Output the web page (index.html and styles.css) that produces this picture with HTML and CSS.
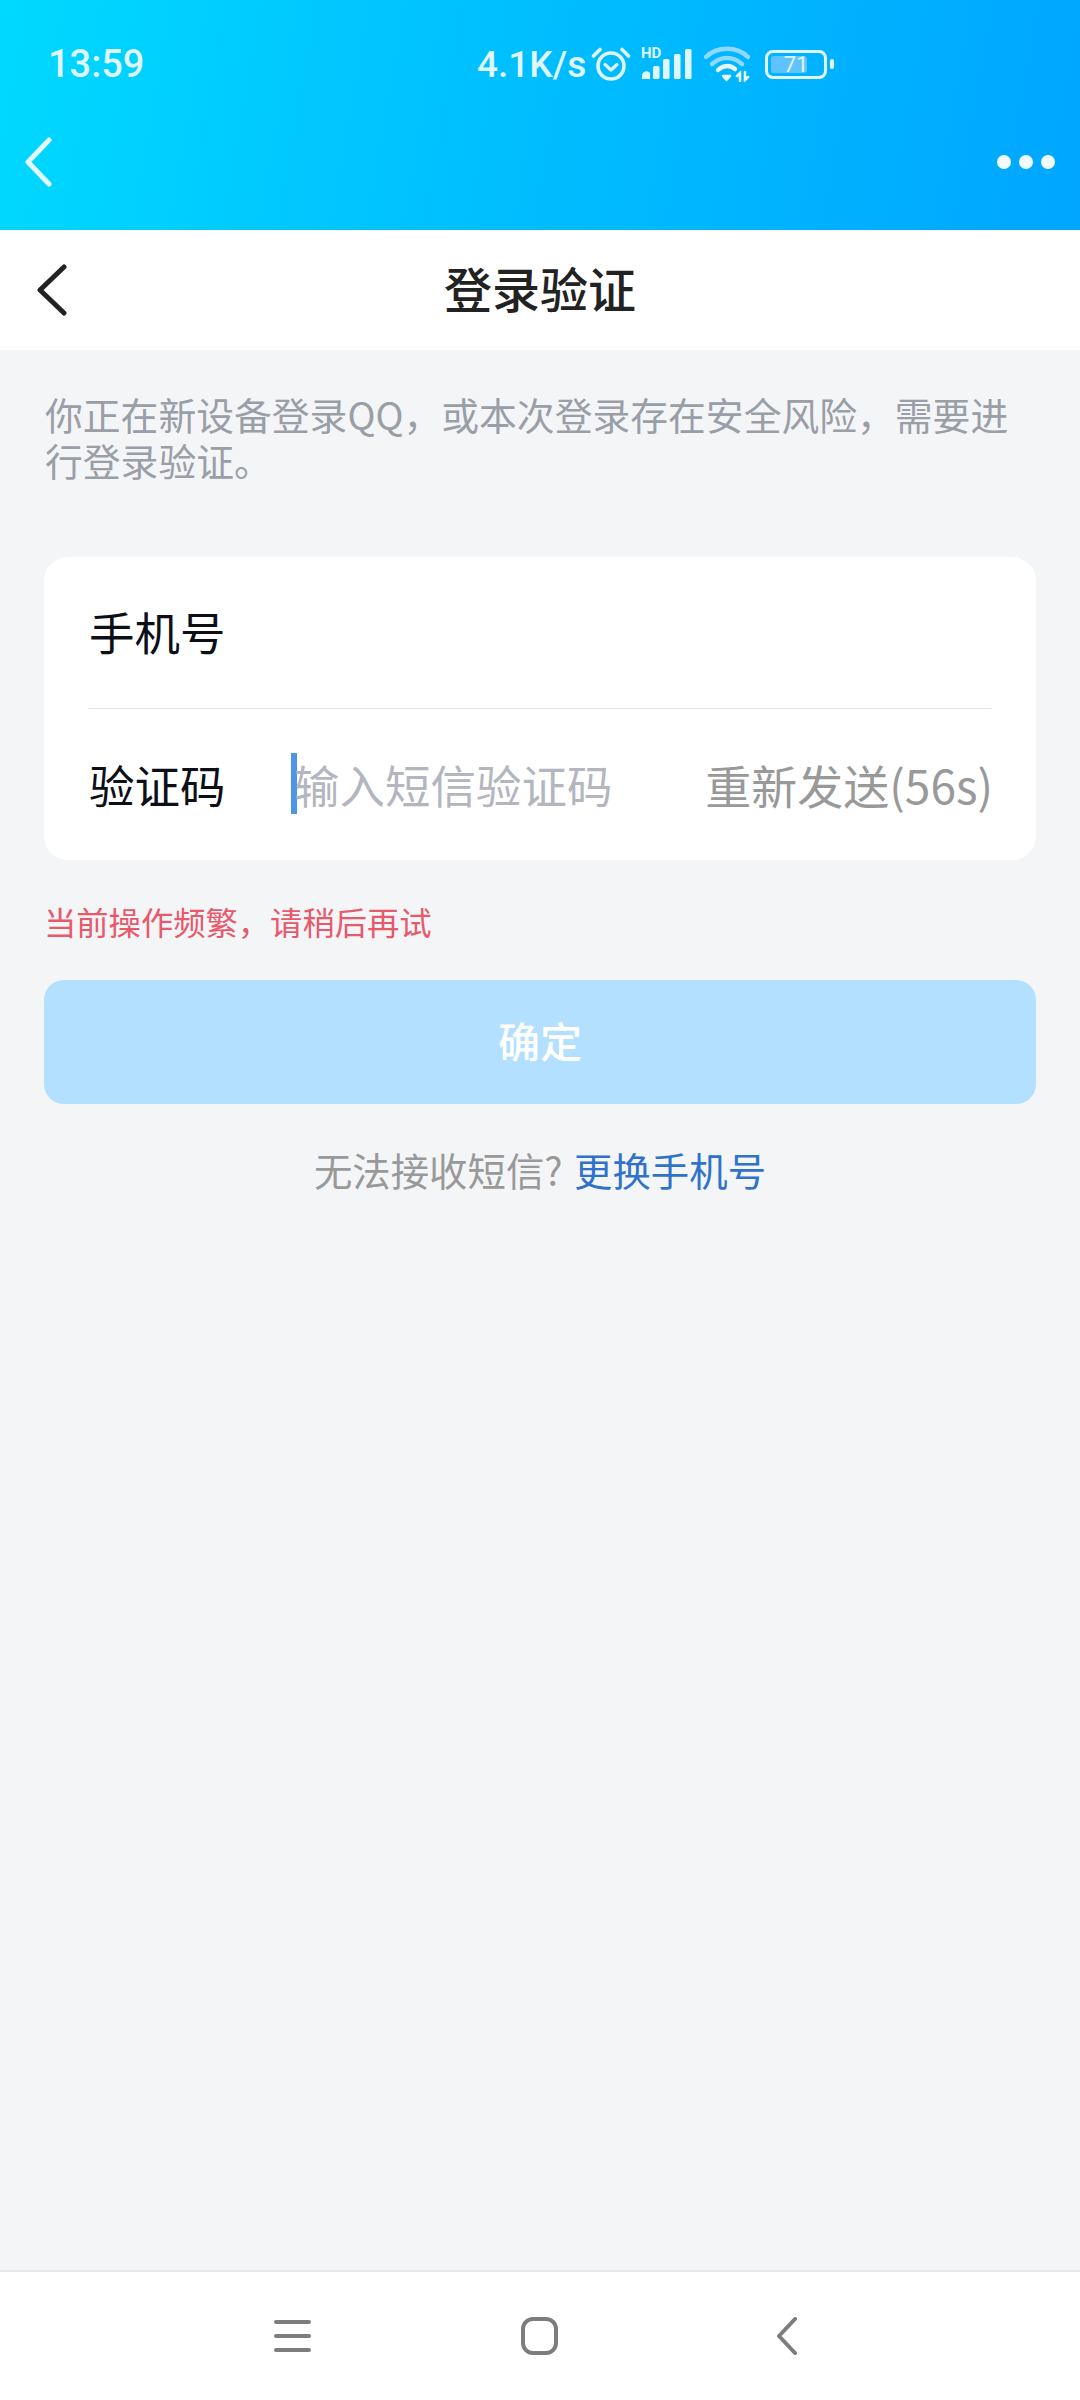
FILE: index.html
```html
<!DOCTYPE html>
<html lang="zh-CN">
<head>
  <meta charset="UTF-8">
  <meta name="viewport" content="width=device-width, initial-scale=1.0">
  <title>登录验证</title>
  <link rel="stylesheet" href="styles.css">
</head>
<body>
  <header class="top">
    <div class="status">
      <span class="status-time">13:59</span>
      <span class="status-speed">4.1K/s</span>
      <svg class="icon-alarm" width="40" height="36" viewBox="0 0 40 36" fill="none" stroke="#dff6ff" stroke-linecap="round" stroke-linejoin="round">
        <circle cx="20" cy="20" r="13" stroke-width="3.6"/>
        <path d="M14 18.500l6 5.500 6-5.500" stroke-width="3.2"/>
        <path d="M2.500 10L9 3.500M37.500 10L31 3.500" stroke-width="3.6"/>
      </svg>
      <div class="signal">
        <span class="signal-hd">HD</span>
        <svg width="50" height="30" viewBox="0 0 50 30" fill="#dff6ff">
          <path d="M0 30v-3a4.500 4.500 0 0 1 8-3v6z"/>
          <rect x="11" y="17" width="6.500" height="13" rx="1.500"/>
          <rect x="21" y="10" width="6.500" height="20" rx="1.500"/>
          <rect x="32" y="5" width="6.500" height="25" rx="1.500"/>
          <rect x="43" y="0" width="6.500" height="30" rx="1.500"/>
        </svg>
      </div>
      <svg class="icon-wifi" width="46" height="36" viewBox="0 0 46 36" fill="none" stroke-linecap="round">
        <path d="M2 11C13 0 33 0 44 11" stroke="#8fd8ff" stroke-width="4.500"/>
        <path d="M8 18c9-8 21-8 30 0" stroke="#8fd8ff" stroke-width="4.500"/>
        <path d="M14 24c5-5 12-5 17-1" stroke="#e8f9ff" stroke-width="4.500"/>
        <path d="M19 30h7l-3.500 4z" fill="#e8f9ff" stroke="#e8f9ff" stroke-width="2.500" stroke-linejoin="round"/>
        <path d="M36 35v-8l-3 3M41 26v8l3-3" stroke="#e8f9ff" stroke-width="2.500"/>
      </svg>
      <div class="battery">
        <div class="battery-body">
          <div class="battery-fill" style="width: 71%"></div>
          <span class="battery-num">71</span>
        </div>
        <div class="battery-tip"></div>
      </div>
    </div>
    <div class="top-nav">
      <svg width="27" height="50" viewBox="0 0 27 50" fill="none" stroke="#e4f8ff" stroke-width="5" stroke-linecap="round" stroke-linejoin="round">
        <path d="M24 3L3 25l21 22"/>
      </svg>
      <div class="dots"><i></i><i></i><i></i></div>
    </div>
  </header>

  <div class="title-bar">
    <svg class="title-back" width="30" height="52" viewBox="0 0 30 52" fill="none" stroke="#222" stroke-width="5" stroke-linecap="round" stroke-linejoin="round">
      <path d="M27 3L3 26l24 23"/>
    </svg>
    <h1 class="title">登录验证</h1>
  </div>

  <main class="content">
    <p class="desc">你正在新设备登录QQ，或本次登录存在安全风险，需要进行登录验证。</p>

    <div class="card">
      <div class="row row-phone">
        <span class="label">手机号</span>
      </div>
      <div class="row row-code">
        <span class="label">验证码</span>
        <span class="caret"></span>
        <span class="placeholder">输入短信验证码</span>
        <span class="resend">重新发送(56s)</span>
      </div>
    </div>

    <p class="error">当前操作频繁，请稍后再试</p>
    <button class="confirm">确定</button>
    <p class="help">无法接收短信? <a class="help-link">更换手机号</a></p>
  </main>

  <nav class="bottom-nav">
    <svg width="37" height="34" viewBox="0 0 37 34" fill="none" stroke="#7d7d7d" stroke-width="4" stroke-linecap="round">
      <path d="M2 3h33M2 17h33M2 31h33"/>
    </svg>
    <svg width="37" height="38" viewBox="0 0 37 38" fill="none" stroke="#7d7d7d" stroke-width="4">
      <rect x="2" y="2" width="33" height="34" rx="10"/>
    </svg>
    <svg width="32" height="38" viewBox="0 0 32 38" fill="none" stroke="#7d7d7d" stroke-width="4" stroke-linecap="round" stroke-linejoin="round">
      <path d="M27 2L11 19l16 17"/>
    </svg>
  </nav>
</body>
</html>
```

FILE: styles.css
```css
* {
  box-sizing: border-box;
}
body {
  margin: 0;
  height: 2400px;
  display: flex;
  flex-direction: column;
  background-color: #f4f5f7;
  font-family: "Noto Sans CJK SC", "Noto Sans", sans-serif;
}

/* blue header with status bar */
.top {
  height: 230px;
  flex-shrink: 0;
  background: linear-gradient(100deg, #00d9ff 0%, #00c2ff 40%, #00a6ff 100%);
  color: #dff6ff;
}
.status {
  height: 128px;
  padding-left: 48px;
  display: flex;
  align-items: center;
  font-family: Roboto, sans-serif;
  font-size: 38px;
  font-weight: 500;
}
.status-time {
  width: 429px;
}
.status-speed {
  width: 114px;
  font-size: 37px;
}
.icon-alarm {
  margin-right: 11px;
}
.signal {
  position: relative;
  width: 50px;
  margin-right: 12px;
}
.signal svg {
  display: block;
}
.signal-hd {
  position: absolute;
  left: -1px;
  top: -3px;
  font-size: 15px;
  line-height: 15px;
  font-weight: 700;
}
.icon-wifi {
  margin-right: 15px;
}
.battery {
  display: flex;
  align-items: center;
  gap: 3px;
}
.battery-body {
  position: relative;
  width: 62px;
  height: 29px;
  padding: 3px;
  border: 3px solid #dff6ff;
  border-radius: 8px;
}
.battery-fill {
  height: 100%;
  background-color: #5fc3ff;
  border-radius: 3px;
}
.battery-num {
  position: absolute;
  inset: 0;
  display: flex;
  align-items: center;
  justify-content: center;
  font-size: 22px;
  font-weight: 400;
}
.battery-tip {
  width: 4px;
  height: 10px;
  background-color: #dff6ff;
  border-radius: 2px;
}
.top-nav {
  height: 67px;
  padding: 0 25px;
  display: flex;
  align-items: center;
  justify-content: space-between;
}
.top-nav svg {
  display: block;
}
.dots {
  display: flex;
  gap: 8px;
}
.dots i {
  width: 14px;
  height: 14px;
  background-color: #f0fbff;
  border-radius: 50%;
}

/* white title bar */
.title-bar {
  height: 120px;
  flex-shrink: 0;
  position: relative;
  display: flex;
  align-items: center;
  justify-content: center;
  background-color: #fff;
}
.title-back {
  position: absolute;
  left: 37px;
  top: 34px;
}
.title {
  margin: 0 0 6px;
  font-size: 48px;
  font-weight: 500;
  color: #222;
}

.content {
  flex: 1;
  padding: 0 44px;
}
.desc {
  margin: 41px 0 0 1px;
  font-size: 37.8px;
  line-height: 46px;
  color: #9a9ea6;
}
.card {
  margin-top: 74px;
  height: 303px;
  padding: 0 45px;
  background-color: #fff;
  border-radius: 24px;
}
.row {
  display: flex;
  align-items: center;
  font-size: 45.5px;
}
.row-phone {
  height: 152px;
  padding-bottom: 3px;
  border-bottom: 1px solid #e4e4e6;
}
.row-code {
  height: 151px;
  padding-bottom: 2px;
}
.label {
  width: 202px;
  color: #0c0f18;
}
.caret {
  width: 6px;
  height: 61px;
  background-color: #4d94ea;
}
.placeholder {
  flex: 1;
  margin-left: -3px;
  color: #b4b6bf;
}
.resend {
  margin-right: -2px;
  font-size: 46px;
  color: #999;
}
.error {
  margin: 39px 0 0;
  font-size: 32.3px;
  line-height: 44px;
  color: #e8596c;
}
.confirm {
  display: block;
  width: 100%;
  height: 124px;
  margin-top: 37px;
  padding: 0 0 5px;
  border: none;
  border-radius: 20px;
  background-color: #b3e0ff;
  color: #fff;
  font-family: inherit;
  font-size: 42px;
  font-weight: 500;
}
.help {
  margin: 39px 0 0;
  text-align: center;
  font-size: 38.4px;
  line-height: 52px;
  color: #999;
}
.help-link {
  margin-left: 3px;
  color: #2f72cc;
}

/* system nav */
.bottom-nav {
  height: 130px;
  flex-shrink: 0;
  padding: 0 280px 0 274px;
  display: flex;
  align-items: center;
  justify-content: space-between;
  background-color: #fff;
  border-top: 2px solid #e6e7ea;
}
```
